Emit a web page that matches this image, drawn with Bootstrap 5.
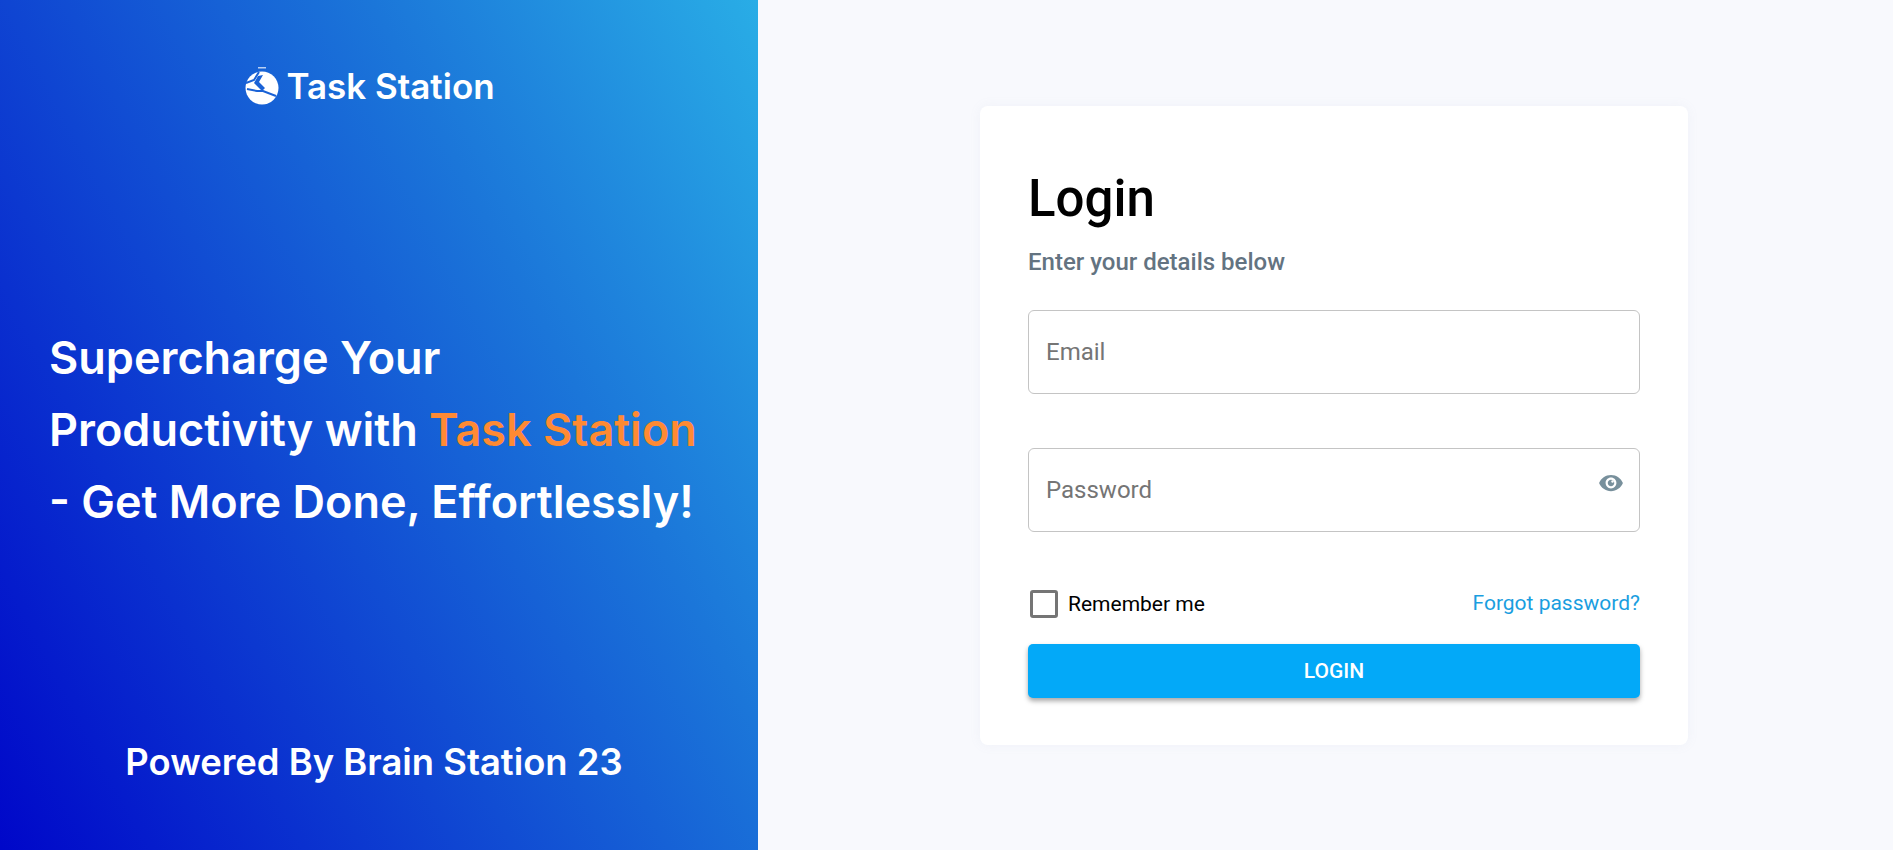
<!DOCTYPE html>
<html lang="en">
<head>
    <meta charset="utf-8" />
    <meta name="viewport" content="width=device-width, initial-scale=1" />
    <title>Task Station - Login</title>
    <link href="https://cdn.jsdelivr.net/npm/bootstrap@5.3.0/dist/css/bootstrap.min.css" rel="stylesheet">
    <style>
        html, body {
            height: 100%;
        }

        body {
            background-color: #f8f9fd;
            font-family: Roboto, sans-serif;
            overflow: hidden;
        }

        .login-page {
            height: 850px;
        }

        /* Left side */
        .promo-panel {
            width: 758px;
            padding: 62px 0 61px;
            color: #fff;
            background: linear-gradient(62deg, #0007c9 0%, #1b76d9 68%, #29ade6 100%);
            font-family: Inter, sans-serif;
            font-weight: 600;
        }

        .brand-logo {
            gap: 7px;
            padding-right: 18px;
            font-size: 35px;
            line-height: 48px;
        }

        .promo-title {
            margin: 14px 0 0 49px;
            width: 700px;
            font-size: 45px;
            line-height: 72px;
            font-weight: 600;
        }

        .promo-accent {
            color: #ff8a33;
        }

        .powered-by {
            padding-right: 10px;
            font-size: 36.4px;
            line-height: 54px;
        }

        /* Right side */
        .login-box {
            width: 708px;
            height: 639px;
            margin: 106px 0 0 222px;
            padding: 48px;
            background: #fff;
            border-radius: 8px;
            box-shadow: 0 0 12px rgba(140, 152, 190, .08);
        }

        .login-heading {
            margin: 15px 0 17px;
            font-size: 51px;
            line-height: 60px;
            font-weight: 500;
            color: #000;
        }

        .login-sub {
            margin-bottom: 32px;
            font-size: 24px;
            line-height: 32px;
            font-weight: 500;
            color: #637381;
        }

        .field-wrap {
            height: 84px;
            margin-bottom: 54px;
        }

        .field-wrap .form-control {
            height: 84px;
            padding: 0 60px 0 17px;
            border: 1px solid #c4c4c4;
            border-radius: 6px;
            font-size: 24px;
            color: #333;
        }

        .field-wrap .form-control::placeholder {
            color: #757575;
        }

        .eye-btn {
            top: 22px;
            right: 16px;
            width: 26px;
            height: 26px;
            line-height: 0;
        }

        .remember-row {
            height: 34px;
            padding-top: 2px;
            margin-bottom: 24px;
        }

        .check-box {
            width: 28px;
            height: 28px;
            margin-left: 2px;
            border: 3px solid #757575;
            border-radius: 3px;
        }

        .remember-label {
            margin-left: 10px;
            padding-top: 2px;
            font-size: 21px;
            color: #000;
        }

        .forgot-link {
            font-size: 21px;
            color: #1a9ee0;
            text-decoration: none;
        }

        .login-btn {
            height: 54px;
            padding-top: 8px;
            background: #03a9f8;
            border: 0;
            border-radius: 5px;
            font-size: 21px;
            font-weight: 500;
            color: #fff;
            box-shadow: 0 3px 5px rgba(0, 0, 0, .35);
        }
    </style>
</head>
<body>
    <div class="login-page d-flex">
        <div class="promo-panel d-flex flex-column justify-content-between flex-shrink-0">
            <div class="brand-logo d-flex align-items-center justify-content-center">
                <svg width="34" height="38" viewBox="0 0 34 38">
                    <rect x="13" y="0" width="8" height="1.5" fill="#fff" opacity=".7"/>
                    <circle cx="17" cy="21" r="16.5" fill="#fff"/>
                    <path d="M1 16 L9 13 L14 5" fill="none" stroke="#1a62d6" stroke-width="2"/>
                    <path d="M2 22 L12 24 L18 24 L31 29" fill="none" stroke="#1a62d6" stroke-width="2"/>
                    <path d="M13 9 L9 16 L17 24 L20 21 L14 15 L18 8 Z" fill="#1a62d6"/>
                </svg>
                <span>Task Station</span>
            </div>
            <h1 class="promo-title">Supercharge Your<br>Productivity with <span class="promo-accent">Task Station</span><br>- Get More Done, Effortlessly!</h1>
            <div class="powered-by text-center">Powered By Brain Station 23</div>
        </div>
        <div class="flex-grow-1">
            <form class="login-box">
                <h2 class="login-heading">Login</h2>
                <p class="login-sub">Enter your details below</p>
                <div class="field-wrap">
                    <input type="text" class="form-control" placeholder="Email">
                </div>
                <div class="field-wrap position-relative">
                    <input type="password" class="form-control" placeholder="Password">
                    <span class="eye-btn position-absolute">
                        <svg width="26" height="26" viewBox="0 0 24 24" fill="#78909c"><path d="M12 4.5C7 4.5 2.73 7.61 1 12c1.73 4.39 6 7.5 11 7.5s9.27-3.11 11-7.5c-1.73-4.39-6-7.5-11-7.5zM12 17c-2.76 0-5-2.24-5-5s2.24-5 5-5 5 2.24 5 5-2.24 5-5 5zm0-8c-1.66 0-3 1.34-3 3s1.34 3 3 3 3-1.34 3-3-1.34-3-3-3z"/><circle cx="13.4" cy="10.6" r="1.1" fill="#fff"/></svg>
                    </span>
                </div>
                <div class="remember-row d-flex align-items-center justify-content-between">
                    <label class="d-flex align-items-center">
                        <span class="check-box d-block"></span>
                        <span class="remember-label">Remember me</span>
                    </label>
                    <a href="#" class="forgot-link">Forgot password?</a>
                </div>
                <button type="button" class="btn login-btn w-100">LOGIN</button>
            </form>
        </div>
    </div>
    <script src="https://cdn.jsdelivr.net/npm/bootstrap@5.3.0/dist/js/bootstrap.bundle.min.js"></script>
</body>
</html>
